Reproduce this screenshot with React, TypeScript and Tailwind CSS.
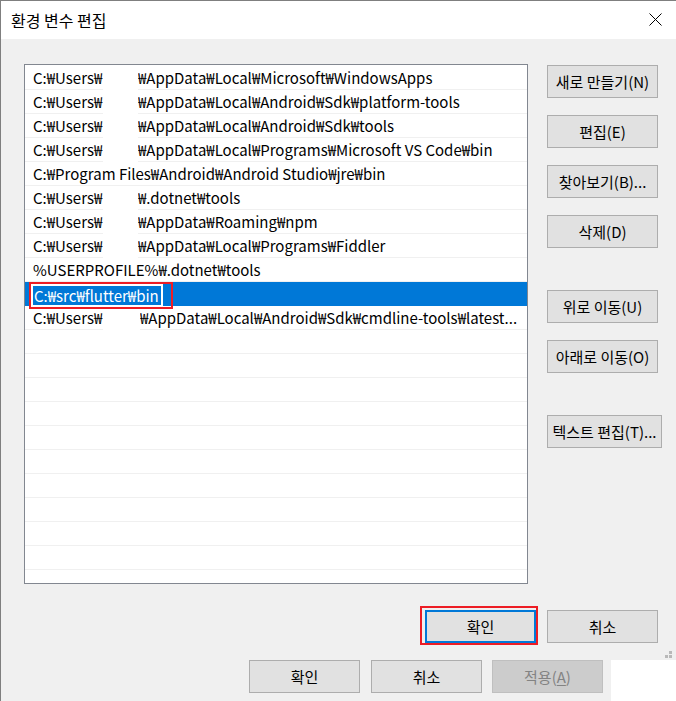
import React from "react";

type Row =
  | { kind: "masked"; head: string; cut: number; mask: number; rest: string }
  | { kind: "plain"; text: string }
  | { kind: "selected"; text: string }
  | { kind: "empty" };

const rows: Row[] = [
  { kind: "masked", head: "C:₩Users₩", cut: 78, mask: 35, rest: "₩AppData₩Local₩Microsoft₩WindowsApps" },
  { kind: "masked", head: "C:₩Users₩", cut: 78, mask: 35, rest: "₩AppData₩Local₩Android₩Sdk₩platform-tools" },
  { kind: "masked", head: "C:₩Users₩", cut: 78, mask: 35, rest: "₩AppData₩Local₩Android₩Sdk₩tools" },
  { kind: "masked", head: "C:₩Users₩", cut: 78, mask: 35, rest: "₩AppData₩Local₩Programs₩Microsoft VS Code₩bin" },
  { kind: "plain", text: "C:₩Program Files₩Android₩Android Studio₩jre₩bin" },
  { kind: "masked", head: "C:₩Users₩", cut: 78, mask: 35, rest: "₩.dotnet₩tools" },
  { kind: "masked", head: "C:₩Users₩", cut: 78, mask: 35, rest: "₩AppData₩Roaming₩npm" },
  { kind: "masked", head: "C:₩Users₩", cut: 78, mask: 35, rest: "₩AppData₩Local₩Programs₩Fiddler" },
  { kind: "plain", text: "%USERPROFILE%₩.dotnet₩tools" },
  { kind: "selected", text: "C:₩src₩flutter₩bin" },
  { kind: "masked", head: "C:₩Users₩", cut: 78, mask: 37, rest: "₩AppData₩Local₩Android₩Sdk₩cmdline-tools₩latest..." },
  ...Array.from({ length: 11 }, () => ({ kind: "empty" as const })),
];

function ListRow({ row }: { row: Row }) {
  if (row.kind === "selected") {
    return (
      <div className="relative z-10 h-[24px] bg-[#0078d7]">
        <div className="absolute left-[6px] top-[2px] h-[23px] w-[132px] bg-white p-[2px]">
          <div className="flex h-full items-center bg-[#0078d7] pl-[1px] pt-px leading-[18px] text-white whitespace-nowrap">
            {row.text}
          </div>
        </div>
        <div className="absolute left-[4px] top-0 h-[27px] w-[144px] border-2 border-[#ed1c24]" />
      </div>
    );
  }
  if (row.kind === "masked") {
    return (
      <div className="flex h-[24px] leading-[20px]">
        <div
          className="flex shrink-0 items-center overflow-hidden whitespace-nowrap border-b border-[#f0f0f0] pl-[8px] pt-px"
          style={{ width: row.cut }}
        >
          {row.head}
        </div>
        <div className="shrink-0 bg-white" style={{ width: row.mask }} />
        <div className="flex min-w-0 flex-1 items-center overflow-hidden whitespace-nowrap border-b border-[#f0f0f0] pt-px">
          {row.rest}
        </div>
      </div>
    );
  }
  if (row.kind === "plain") {
    return (
      <div className="flex h-[24px] items-center whitespace-nowrap border-b border-[#f0f0f0] pl-[8px] pt-px leading-[20px]">
        {row.text}
      </div>
    );
  }
  return <div className="h-[24px] border-b border-[#f0f0f0]" />;
}

function Btn({ children, className = "" }: { children: React.ReactNode; className?: string }) {
  return (
    <div
      className={`flex h-[33px] items-center justify-center whitespace-nowrap border border-[#adadad] bg-[#e1e1e1] leading-[20px] text-black ${className}`}
    >
      {children}
    </div>
  );
}

export default function App() {
  return (
    <div
      className="flex h-[701px] w-[676px] flex-col overflow-hidden bg-[#f0f0f0] text-[15px] leading-[20px] text-black"
      style={{ fontFamily: '"Noto Sans CJK KR", "Noto Sans", sans-serif' }}
    >
      {/* dialog */}
      <div className="relative flex h-[660px] shrink-0 flex-col border-l border-t border-[#7f7f7f]">
        {/* title bar */}
        <div className="flex h-[38px] shrink-0 items-center justify-between bg-white pl-[10px] pr-[14px]">
          <span className="pb-[1px] text-[16px] leading-[22px]">환경 변수 편집</span>
          <svg width="13" height="13" viewBox="0 0 13 13" className="mb-[1px]">
            <path d="M0.5 0.5 L12.5 12.5 M12.5 0.5 L0.5 12.5" stroke="#000" strokeWidth="1" />
          </svg>
        </div>

        {/* body */}
        <div className="flex flex-col pl-[23px] pt-[25px]">
          <div className="flex">
            <div className="h-[520px] w-[504px] shrink-0 overflow-hidden border border-[#828790] bg-white pt-px">
              {rows.map((r, i) => (
                <ListRow key={i} row={r} />
              ))}
            </div>
            <div className="ml-[19px] flex flex-col pt-px">
              <Btn className="w-[111px]">새로 만들기(N)</Btn>
              <Btn className="mt-[17px] w-[111px]">편집(E)</Btn>
              <Btn className="mt-[17px] w-[111px]">찾아보기(B)...</Btn>
              <Btn className="mt-[17px] w-[111px]">삭제(D)</Btn>
              <Btn className="mt-[42px] w-[111px]">위로 이동(U)</Btn>
              <Btn className="mt-[17px] w-[111px]">아래로 이동(O)</Btn>
              <Btn className="mt-[42px] w-[115px]">텍스트 편집(T)...</Btn>
            </div>
          </div>

          <div className="ml-[401px] mt-[26px] flex gap-[11px]">
            <div className="relative">
              <div className="flex h-[33px] w-[111px] items-center justify-center border-2 border-[#0078d7] bg-[#e1e1e1]">
                확인
              </div>
              <div className="absolute -bottom-[2px] -left-[5px] -right-[2px] -top-[4px] border-2 border-[#ed1c24]" />
            </div>
            <Btn className="w-[111px]">취소</Btn>
          </div>
        </div>

        {/* resize grip */}
        <svg width="8" height="8" viewBox="0 0 8 8" className="absolute bottom-[1px] right-[3px]">
          <rect x="4" y="0" width="3" height="3" fill="#b9b9b9" />
          <rect x="0" y="4" width="3" height="3" fill="#b9b9b9" />
          <rect x="4" y="4" width="3" height="3" fill="#b9b9b9" />
        </svg>
      </div>

      {/* parent window strip */}
      <div className="flex flex-1">
        <div className="flex w-[611px] shrink-0 border-l border-[#7f7f7f] pl-[248px]">
          <Btn className="w-[111px]">확인</Btn>
          <Btn className="ml-[11px] w-[111px]">취소</Btn>
          <div className="ml-[10px] flex h-[33px] w-[111px] items-center justify-center border border-[#bfbfbf] bg-[#cccccc] text-[#838383]">
            적용(<span className="underline underline-offset-2">A</span>)
          </div>
        </div>
        <div className="flex-1 bg-white" />
      </div>
    </div>
  );
}
